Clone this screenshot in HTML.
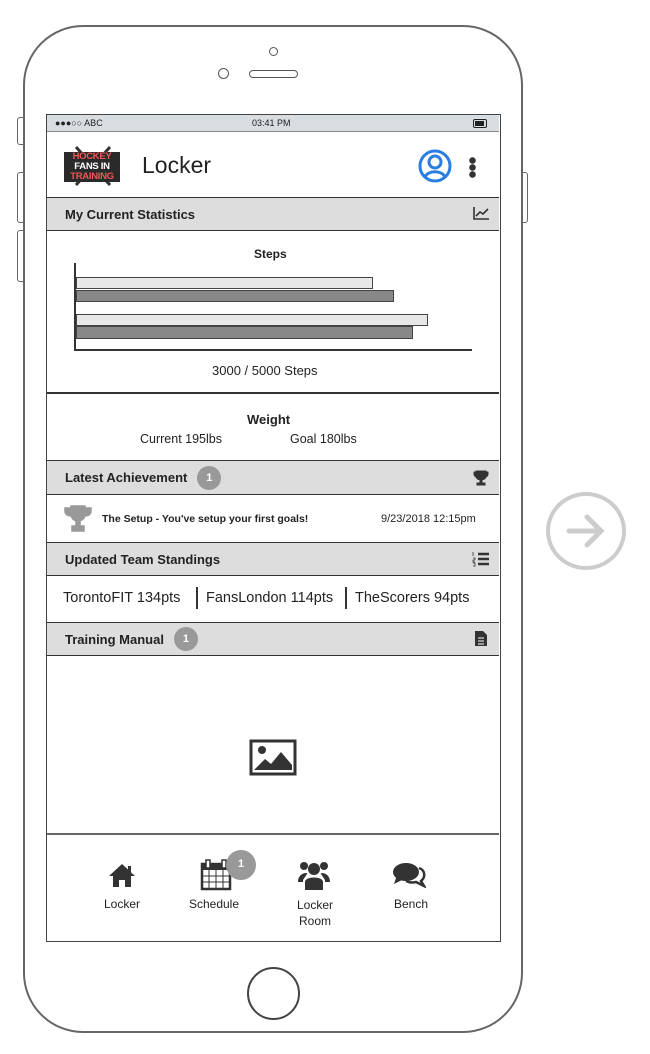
<!DOCTYPE html>
<html><head><style>
*{margin:0;padding:0;box-sizing:border-box}
body{width:650px;height:1054px;background:#fff;position:relative;font-family:"Liberation Sans",sans-serif;color:#222;overflow:hidden}
.a{position:absolute}
.hdr{position:absolute;left:47px;width:452px;background:#ddd;border-top:1.5px solid #333;border-bottom:1.5px solid #333;font-weight:bold;font-size:13px;padding-left:18px;display:flex;align-items:center}
.badge{display:inline-block;width:24px;height:24px;border-radius:50%;background:#999;color:#fff;font-size:11px;text-align:center;line-height:24px;margin-left:10px}
.nav{position:absolute;top:897px;font-size:12px;text-align:center;width:80px}
</style></head><body>
<div class="a" style="left:23px;top:25px;width:500px;height:1008px;border:2px solid #666;border-radius:60px"></div>
<div class="a" style="left:17px;top:117px;width:7px;height:28px;border:1.5px solid #666;border-right:none;border-radius:3px 0 0 3px"></div>
<div class="a" style="left:17px;top:172px;width:7px;height:51px;border:1.5px solid #666;border-right:none;border-radius:3px 0 0 3px"></div>
<div class="a" style="left:17px;top:230px;width:7px;height:52px;border:1.5px solid #666;border-right:none;border-radius:3px 0 0 3px"></div>
<div class="a" style="left:522px;top:172px;width:6px;height:51px;border:1.5px solid #666;border-left:none;border-radius:0 3px 3px 0"></div>
<div class="a" style="left:269px;top:47px;width:9px;height:9px;border:1.5px solid #555;border-radius:50%"></div>
<div class="a" style="left:218px;top:68px;width:11px;height:11px;border:1.5px solid #555;border-radius:50%"></div>
<div class="a" style="left:249px;top:70px;width:49px;height:8px;border:1.5px solid #555;border-radius:4px"></div>
<div class="a" style="left:247px;top:967px;width:53px;height:53px;border:2px solid #444;border-radius:50%"></div>
<div class="a" style="left:546px;top:492px;width:80px;height:78px;border:4px solid #ccc;border-radius:50%"></div>
<svg class="a" style="left:563px;top:510px" width="46" height="42"><path d="M6 21H38M24 7L38 21L24 35" stroke="#ccc" stroke-width="5" fill="none" stroke-linecap="round"/></svg>

<div class="a" style="left:46px;top:114px;width:455px;height:828px;border:1.5px solid #444"></div>
<div class="a" style="left:47px;top:115px;width:452px;height:17px;background:#d7dde0;border-bottom:1px solid #888;font-size:9px">
<span class="a" style="left:8px;top:3px">●●●○○ ABC</span><span class="a" style="left:205px;top:3px">03:41 PM</span>
<span class="a" style="left:426px;top:4px;width:14px;height:9px;border:1px solid #222;border-radius:2px"><span class="a" style="left:1px;top:1px;width:9px;height:5px;background:#222"></span></span></div>
<svg class="a" style="left:68px;top:145px" width="50" height="42"><path d="M8 2L42 40M42 2L8 40" stroke="#333" stroke-width="3"/></svg>
<div class="a" style="left:64px;top:152px;width:56px;height:30px;font-size:9.5px;font-weight:bold;color:#fff;background:#2a2a2a;line-height:10px;text-align:center;letter-spacing:-0.3px"><span style="color:#e55">HOCKEY</span><br>FANS IN<br><span style="color:#e55">TRAINING</span></div>
<div class="a" style="left:142px;top:152px;font-size:23px">Locker</div>
<svg class="a" style="left:418px;top:149px" width="34" height="34"><circle cx="17" cy="17" r="15" fill="none" stroke="#2a7de1" stroke-width="3"/><circle cx="17" cy="13" r="6" fill="none" stroke="#2a7de1" stroke-width="3"/><path d="M7 28C10 21 24 21 27 28" fill="none" stroke="#2a7de1" stroke-width="3"/></svg>
<div class="a" style="left:469px;top:157px;width:7px;height:21px;background:radial-gradient(circle,#333 3px,transparent 3.5px) 0 0/7px 7px"></div>

<div class="hdr" style="top:197px;height:34px">My Current Statistics</div>
<svg class="a" style="left:473px;top:206px" width="17" height="14"><path d="M1 1V13H16M3 10L7 6L10 8L15 3" stroke="#333" stroke-width="1.6" fill="none"/></svg>
<div class="a" style="left:254px;top:247px;font-size:12px;font-weight:bold">Steps</div>
<div class="a" style="left:74px;top:263px;width:1.5px;height:88px;background:#333"></div>
<div class="a" style="left:74px;top:349px;width:398px;height:1.5px;background:#333"></div>
<div class="a" style="left:76px;top:277px;width:297px;height:12px;background:#e8e8e8;border:1px solid #444"></div>
<div class="a" style="left:76px;top:290px;width:318px;height:12px;background:#888;border:1px solid #444"></div>
<div class="a" style="left:76px;top:314px;width:352px;height:12px;background:#e8e8e8;border:1px solid #444"></div>
<div class="a" style="left:76px;top:326px;width:337px;height:13px;background:#888;border:1px solid #444"></div>
<div class="a" style="left:212px;top:363px;font-size:13px">3000 / 5000 Steps</div>
<div class="a" style="left:47px;top:392px;width:452px;height:1.5px;background:#333"></div>
<div class="a" style="left:247px;top:412px;font-size:13px;font-weight:bold">Weight</div>
<div class="a" style="left:140px;top:432px;font-size:12.5px">Current 195lbs</div>
<div class="a" style="left:290px;top:432px;font-size:12.5px">Goal 180lbs</div>

<div class="hdr" style="top:460px;height:35px">Latest Achievement<span class="badge">1</span></div>
<svg class="a" style="left:473px;top:470px" width="16" height="16"><path d="M3 1H13V6C13 9 10 10 8 10C6 10 3 9 3 6ZM3 2H1V4C1 6 3 7 3 7M13 2H15V4C15 6 13 7 13 7M7 10H9V13H7ZM4 13H12V15H4Z" fill="#333" stroke="#333"/></svg>
<svg class="a" style="left:63px;top:505px" width="30" height="28"><path d="M8 1H22V9C22 14 18 16 15 16C12 16 8 14 8 9ZM8 3H2V6C2 10 6 11 8 11M22 3H28V6C28 10 24 11 22 11M13 16H17V21H13ZM9 21H21V26H9Z" fill="#999" stroke="#999" stroke-width="1.5"/></svg>
<div class="a" style="left:102px;top:513px;font-size:10.5px;font-weight:bold">The Setup - You've setup your first goals!</div>
<div class="a" style="left:381px;top:513px;font-size:11px">9/23/2018 12:15pm</div>

<div class="hdr" style="top:542px;height:34px">Updated Team Standings</div>
<svg class="a" style="left:472px;top:551px" width="18" height="16"><path d="M6 3H17M6 8H17M6 13H17" stroke="#333" stroke-width="2.5"/><path d="M1 1V5M1 7H3V9H1V11H3M1 12H3V15H1" stroke="#333" stroke-width="0.8" fill="none"/></svg>
<div class="a" style="left:63px;top:590px;font-size:14.5px">TorontoFIT 134pts</div>
<div class="a" style="left:196px;top:587px;width:1.5px;height:22px;background:#333"></div>
<div class="a" style="left:206px;top:590px;font-size:14.5px">FansLondon 114pts</div>
<div class="a" style="left:345px;top:587px;width:1.5px;height:22px;background:#333"></div>
<div class="a" style="left:355px;top:590px;font-size:14.5px">TheScorers 94pts</div>

<div class="hdr" style="top:622px;height:34px">Training Manual<span class="badge">1</span></div>
<svg class="a" style="left:474px;top:630px" width="14" height="17"><path d="M1 1H9L13 5V16H1Z" fill="#333"/><path d="M4 8H10M4 11H10M4 14H10" stroke="#fff" stroke-width="1"/></svg>
<svg class="a" style="left:249px;top:739px" width="48" height="37"><rect x="2" y="2" width="44" height="33" fill="none" stroke="#333" stroke-width="3"/><circle cx="13" cy="11" r="4" fill="#333"/><path d="M5 31L16 20L22 25L32 13L43 26V31Z" fill="#333"/></svg>

<div class="a" style="left:47px;top:833px;width:452px;height:1.5px;background:#666"></div>
<svg class="a" style="left:107px;top:862px" width="30" height="26"><path d="M15 2L2 14H6V25H12V18H18V25H24V14H28Z" fill="#333"/><rect x="21" y="4" width="3" height="6" fill="#333"/></svg>
<div class="nav" style="left:82px">Locker</div>
<svg class="a" style="left:200px;top:859px" width="32" height="32"><rect x="2" y="5" width="28" height="25" fill="none" stroke="#333" stroke-width="2.5"/><rect x="2" y="5" width="28" height="6" fill="#333"/><path d="M9 11V29M16 11V29M23 11V29M3 17H29M3 23H29" stroke="#333" stroke-width="1"/><rect x="6" y="1" width="4" height="8" fill="#fff" stroke="#333" stroke-width="1.5"/><rect x="22" y="1" width="4" height="8" fill="#fff" stroke="#333" stroke-width="1.5"/></svg>
<div class="a" style="left:226px;top:850px;width:30px;height:30px;border-radius:50%;background:#999;color:#fff;font-size:11px;text-align:center;line-height:28px;font-weight:bold">1</div>
<div class="nav" style="left:174px">Schedule</div>
<svg class="a" style="left:297px;top:860px" width="34" height="31"><circle cx="17" cy="9" r="6" fill="#333"/><circle cx="7" cy="6" r="4" fill="#333"/><circle cx="27" cy="6" r="4" fill="#333"/><path d="M8 30V22C8 16 26 16 26 22V30Z" fill="#333"/><path d="M1 22C1 12 12 12 10 14L6 20V22Z M33 22C33 12 22 12 24 14L28 20V22Z" fill="#333"/></svg>
<div class="nav" style="left:275px;line-height:16px">Locker<br>Room</div>
<svg class="a" style="left:392px;top:862px" width="34" height="26"><ellipse cx="14" cy="10" rx="13" ry="9" fill="#333"/><path d="M4 16L2 22L10 18Z" fill="#333"/><path d="M27 6C33 8 34 15 29 19L32 24L24 20C20 21 16 20 14 19" fill="none" stroke="#333" stroke-width="2.5"/></svg>
<div class="nav" style="left:371px">Bench</div>
</body></html>
